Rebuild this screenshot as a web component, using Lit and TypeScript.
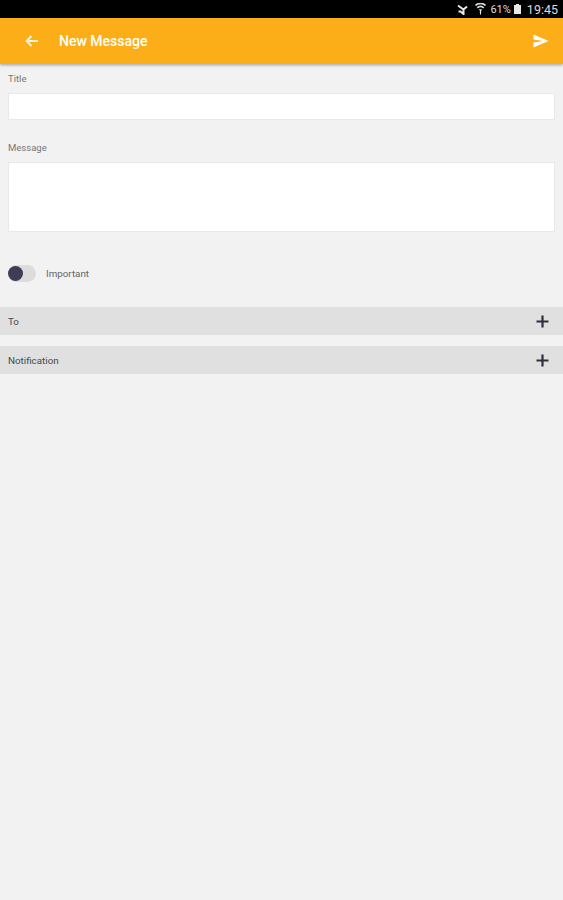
import { LitElement, html, css } from 'lit';
import { customElement } from 'lit/decorators.js';

@customElement('app-root')
export class AppRoot extends LitElement {
  static styles = css`
    :host {
      display: block;
      height: 900px;
      overflow: hidden;
      background: #f2f2f2;
      font-family: Roboto, "Liberation Sans", sans-serif;
    }

    .status {
      height: 18px;
      background: #000;
      color: #dcdcdc;
      display: flex;
      align-items: center;
      justify-content: flex-end;
      padding-right: 5px;
      font-size: 12.5px;
    }
    .status svg { display: block; }
    .mute { margin-right: 6px; }
    .wifi { margin-right: 4px; }
    .pct { font-size: 11px; }
    .batt { margin: 0 6px 0 3px; }

    .bar {
      height: 46px;
      background: #fbae17;
      box-shadow: 0 1px 3px rgba(0, 0, 0, 0.35);
      display: flex;
      align-items: center;
      color: #fff;
      position: relative;
    }
    .back { margin-left: 25px; }
    .bar h1 {
      margin: 0 0 0 20px;
      font-size: 14px;
      font-weight: 500;
    }
    .send { margin-left: auto; margin-right: 14px; }

    .field { padding: 0 8px; }
    .label {
      color: #777;
      font-size: 9.5px;
      line-height: 12px;
    }
    .box {
      background: #fff;
      border: 1px solid #e9e9e9;
      box-sizing: border-box;
      margin-top: 8px;
    }
    .title-field { padding-top: 9px; }
    .title-field .box { height: 27px; }
    .msg-field { padding-top: 22px; }
    .msg-field .box { height: 70px; }

    .toggle-row {
      display: flex;
      align-items: center;
      padding: 32px 8px 0;
      height: 18px;
    }
    .track {
      width: 28px;
      height: 17px;
      border-radius: 9px;
      background: #dcdcdc;
      position: relative;
    }
    .knob {
      position: absolute;
      left: 0;
      top: 1px;
      width: 15px;
      height: 15px;
      border-radius: 50%;
      background: #3d3d55;
    }
    .toggle-row span {
      margin-left: 10px;
      color: #666;
      font-size: 9.8px;
    }

    .section {
      height: 28px;
      background: #e0e0e0;
      display: flex;
      align-items: center;
      justify-content: space-between;
      padding: 0 14px 0 8px;
      color: #484848;
      font-size: 9.8px;
    }
    .first { margin-top: 25px; }
    .second { margin-top: 11px; }
  `;

  private section(name: string, cls: string) {
    return html`
      <div class="section ${cls}">
        <span>${name}</span>
        <svg width="13" height="13" viewBox="0 0 13 13">
          <path d="M6.5 0.5v12M0.5 6.5h12" stroke="#2e2e3c" stroke-width="2.2" fill="none" />
        </svg>
      </div>
    `;
  }

  render() {
    return html`
      <div class="status">
        <svg class="mute" width="12" height="11" viewBox="0 0 12 11">
          <path d="M1 1.5 6.5 5.5 10 2.5M6.5 5.5V10L3.5 7.5H1.5" stroke="#e8e8e8" stroke-width="2" fill="none" />
        </svg>
        <svg class="wifi" width="11" height="12" viewBox="0 0 11 12">
          <path d="M0.5 2.5a7 7 0 0 1 10 0M2.3 4.8a4.4 4.4 0 0 1 6.4 0" stroke="#dcdcdc" stroke-width="1.7" fill="none" />
          <path d="M3.8 6.2h3.4l-1 1.4-.2 4h-1l-.2-4z" fill="#e8e8e8" />
        </svg>
        <span class="pct">61%</span>
        <svg class="batt" width="7" height="10" viewBox="0 0 7 10">
          <path d="M2 0h3v1h2v9H0V1h2z" fill="#e8e8e8" />
        </svg>
        <span>19:45</span>
      </div>

      <div class="bar">
        <svg class="back" width="14" height="12" viewBox="0 0 14 12">
          <path d="M13 6H2M6.5 1 1.5 6l5 5" stroke="#fff" stroke-opacity="0.85" stroke-width="1.8" fill="none" />
        </svg>
        <h1>New Message</h1>
        <svg class="send" width="16" height="14" viewBox="0 0 16 14">
          <path d="M0.5 0.5 15.5 7 0.5 13.5V8.5L10 7 0.5 5.5z" fill="#fff" />
        </svg>
      </div>

      <div class="field title-field">
        <div class="label">Title</div>
        <div class="box"></div>
      </div>
      <div class="field msg-field">
        <div class="label">Message</div>
        <div class="box"></div>
      </div>

      <div class="toggle-row">
        <div class="track"><div class="knob"></div></div>
        <span>Important</span>
      </div>

      ${this.section('To', 'first')}
      ${this.section('Notification', 'second')}
    `;
  }
}
